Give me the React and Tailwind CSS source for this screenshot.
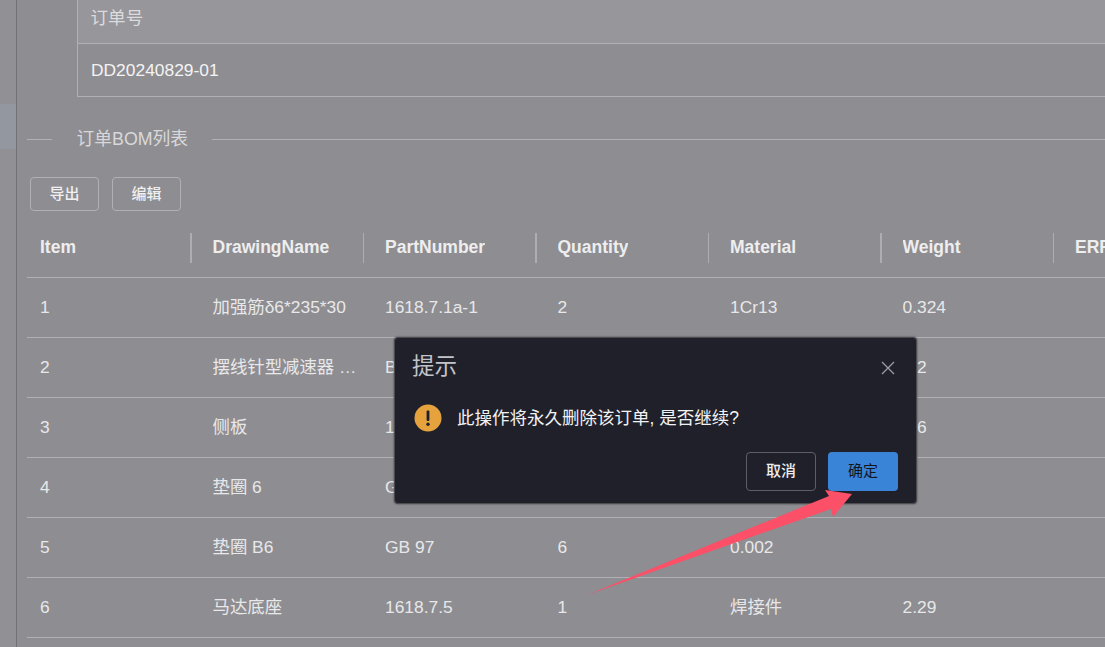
const font = { fontFamily: '"Liberation Sans","Noto Sans CJK SC",sans-serif' };

const columns = ["Item", "DrawingName", "PartNumber", "Quantity", "Material", "Weight", "ERP"];
const rows = [
  ["1", "加强筋δ6*235*30", "1618.7.1a-1", "2", "1Cr13", "0.324", ""],
  ["2", "摆线针型减速器 …", "BWD", "1", "", "1.2", ""],
  ["3", "侧板", "1618.7.3", "2", "", "3.6", ""],
  ["4", "垫圈 6", "GB 93", "6", "", "", ""],
  ["5", "垫圈 B6", "GB 97", "6", "0.002", "", ""],
  ["6", "马达底座", "1618.7.5", "1", "焊接件", "2.29", ""],
];

function Row({ cells, head }) {
  return (
    <div className="grid h-[60px] grid-cols-[repeat(7,172.5px)] border-b border-[#b1b0b4]">
      {cells.map((c, i) => (
        <div key={i} className="relative flex min-w-0 items-center pl-[13px] pr-[8px]">
          <span className={head ? "truncate text-[17.5px] font-bold text-[#eeeeef]" : "truncate whitespace-pre text-[17.4px] text-[#e8e8ea]"}>{c}</span>
          {head && i < 6 && <span className="absolute right-[8px] top-[15px] h-[30px] w-[1.5px] bg-[#aeadb1]" />}
        </div>
      ))}
    </div>
  );
}

export default function App() {
  return (
    <div style={font} className="relative flex h-[647px] w-[1105px] overflow-hidden bg-[#8e8d91]">
      <aside className="w-[17px] shrink-0 border-r border-[#727175] bg-[#919094] pt-[104px]">
        <div className="h-[45px] bg-[#93979f]" />
      </aside>

      <main className="min-w-0 flex-1 pl-[10px]">
        <section className="ml-[50px] h-[97px] border-b border-l border-[#b1b0b4]">
          <div className="flex h-[44px] items-center border-b border-[#b1b0b4] bg-[#97969b] pb-[7px] pl-[12.5px] text-[17.6px] text-[#dcdcde]">订单号</div>
          <div className="flex h-[52px] items-center pl-[13px] text-[17.4px] text-[#f4f4f5]">DD20240829-01</div>
        </section>

        <div className="mt-[30px] flex h-[25px] items-center">
          <span className="h-px w-[25px] bg-[#b1b0b4]" />
          <span className="pl-[24.5px] pr-[24px] text-[17.8px] text-[#d8d8da]">订单BOM列表</span>
          <span className="h-px flex-1 bg-[#b1b0b4]" />
        </div>

        <div className="ml-[3px] mt-[25px] flex h-[35px] gap-[13px]">
          {["导出", "编辑"].map((t) => (
            <button key={t} className="h-[34px] w-[69px] rounded-[4px] border border-[#b1b0b4] text-[15px] font-medium text-[#f0f0f1]">{t}</button>
          ))}
        </div>

        <div className="mt-[6px] w-[1207.5px]">
          <Row cells={columns} head />
          {rows.map((r) => <Row key={r[0]} cells={r} />)}
        </div>
      </main>

      <div className="absolute left-[394px] top-[337px] h-[167px] w-[523px] rounded-[4px] border border-[#4c4c50] bg-[#20202b] shadow-[0_0_2px_#3a3a3e]">
        <div className="flex h-[57px] items-center justify-between pl-[17px] pr-[21px]">
          <span className="text-[22.5px] text-[#c4c4c8]">提示</span>
          <svg className="mt-[3px]" width="14" height="14" viewBox="0 0 14 14" fill="none" stroke="#a0a0a6" strokeWidth="1.2">
            <path d="M1 1 13 13M13 1 1 13" />
          </svg>
        </div>
        <div className="flex h-[46px] items-center pl-[19px]">
          <svg width="28" height="28" viewBox="0 0 28 28" className="shrink-0">
            <circle cx="14" cy="14" r="13.5" fill="#e6a23c" />
            <rect x="12.6" y="6.6" width="2.8" height="10.4" rx="1" fill="#20202b" />
            <circle cx="14" cy="20.3" r="1.7" fill="#20202b" />
          </svg>
          <span className="ml-[15px] text-[17.5px] text-[#f2f2f3]">此操作将永久删除该订单, 是否继续?</span>
        </div>
        <div className="mt-[11px] flex justify-end gap-[12px] pr-[18px]">
          <button className="h-[39px] w-[70px] rounded-[4px] border border-[#5e5e64] text-[15px] font-medium text-[#eeeeef]">取消</button>
          <button className="h-[39px] w-[70px] rounded-[4px] bg-[#3a84d8] text-[15px] text-[#14161d]">确定</button>
        </div>
      </div>

      <svg className="pointer-events-none absolute left-[580px] top-[480px]" width="300" height="120" viewBox="0 0 300 120">
        <path d="M7 115 249 16 245 10 272 14 253 37 251 29Z" fill="#fb5068" />
      </svg>
    </div>
  );
}
